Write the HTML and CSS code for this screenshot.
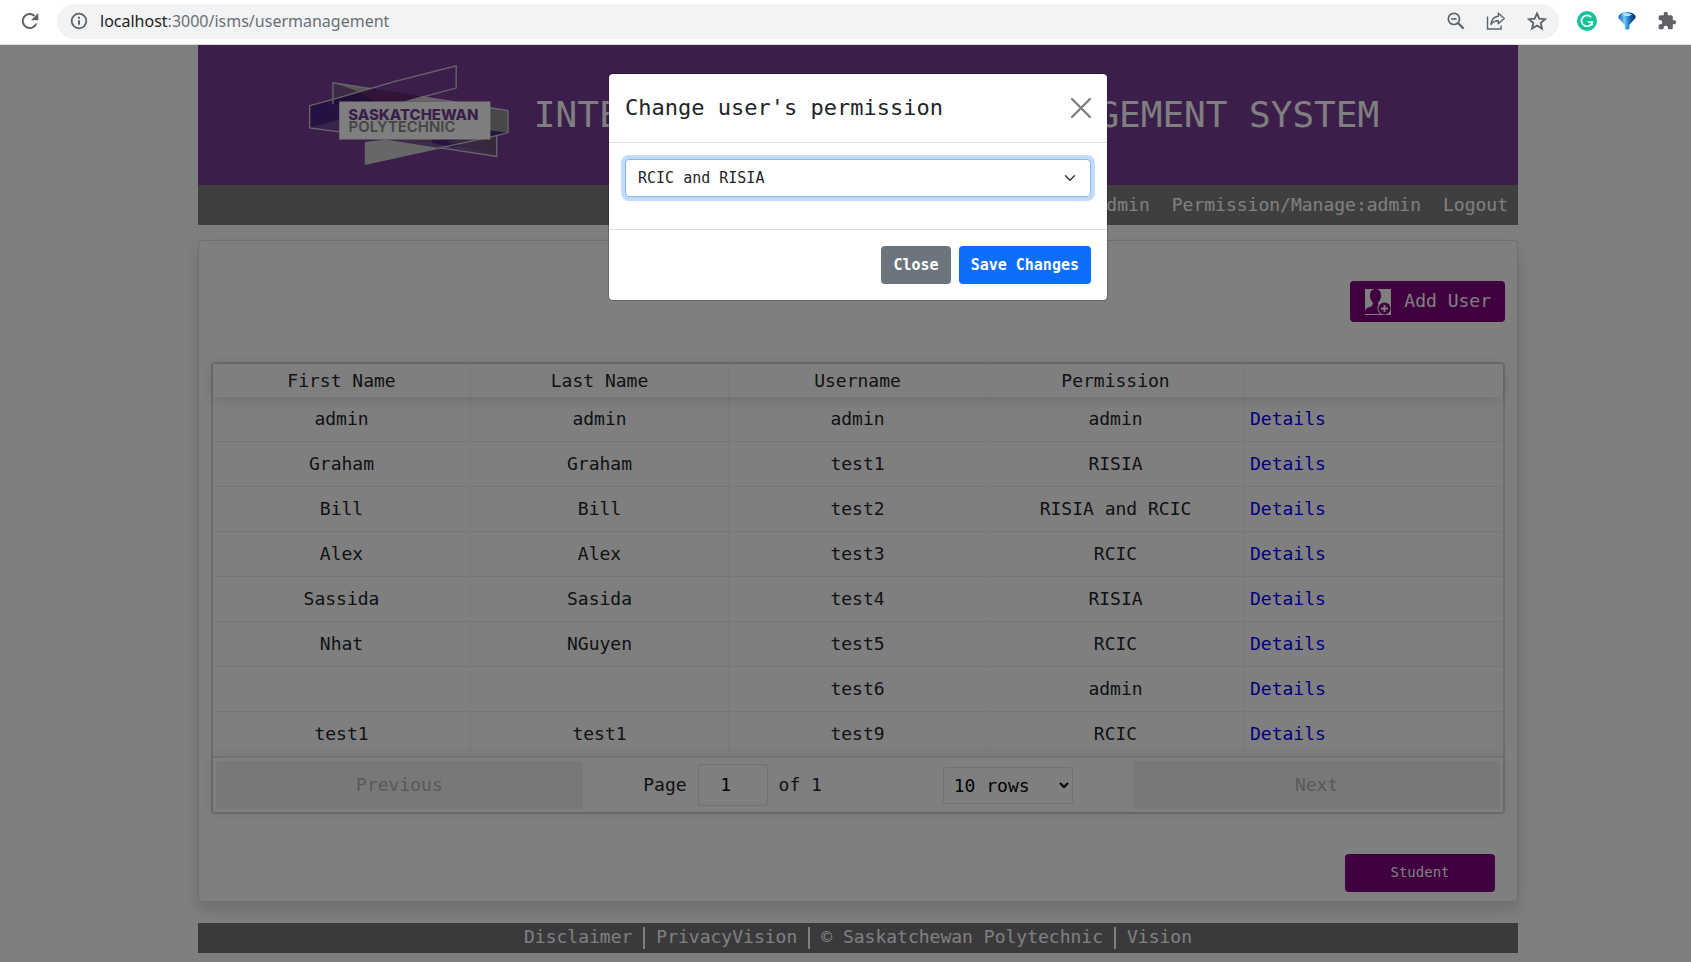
FILE: index.html
```html
<!DOCTYPE html>
<html lang="en">
<head>
<meta charset="utf-8">
<title>User management</title>
<link rel="stylesheet" href="styles.css">
</head>
<body>
<div class="toolbar">
  <button class="icon-button" type="button" aria-label="Reload">
    <svg width="18" height="18" viewBox="0 0 18 18"><path d="M15.3 11.5A7 7 0 1 1 13.6 4" fill="none" stroke="#5f6368" stroke-width="2"/><path d="M17.3 1v7.2h-7.2z" fill="#5f6368"/></svg>
  </button>
  <div class="address">
    <svg width="18" height="18" viewBox="0 0 18 18" fill="none" stroke="#5f6368" stroke-width="2"><circle cx="9" cy="9" r="7.3" stroke-width="1.8"/><path d="M9 8.2v4.6M9 4.8v2"/></svg>
    <div class="url"><span class="host">localhost</span>:3000/isms/usermanagement</div>
    <div class="address-actions">
      <button class="icon-button" type="button" aria-label="Zoom out">
        <svg width="18" height="18" viewBox="0 0 18 18" fill="none" stroke="#5f6368" stroke-width="1.7"><circle cx="6.9" cy="6.9" r="5.6"/><path d="M4.2 6.9h5.4"/><path d="M11 11l5.6 5.6" stroke-width="2.2"/></svg>
      </button>
      <button class="icon-button" type="button" aria-label="Share">
        <svg width="20" height="20" viewBox="0 0 20 20" fill="none" stroke="#5f6368" stroke-width="1.4"><path d="M1.5 5.5V18h13.6v-3.5"/><path d="M12.3 2.2l6 5.3-6 5.3V9.7C9 9.6 6.8 10.8 5 13.5 5.4 9 7.8 5.8 12.3 5.3z" stroke-linejoin="round"/></svg>
      </button>
      <button class="icon-button" type="button" aria-label="Bookmark">
        <svg width="20" height="20" viewBox="0 0 20 20" fill="none" stroke="#5f6368" stroke-width="1.8"><path d="M10 2.4l2.300 5.300 5.800.5-4.400 3.800 1.300 5.600-5-3-5 3 1.300-5.600-4.400-3.800 5.800-.5z"/></svg>
      </button>
    </div>
  </div>
  <div class="extensions">
    <button class="icon-button" type="button" aria-label="Writing assistant">
      <svg width="20" height="20" viewBox="0 0 20 20"><circle cx="10" cy="10" r="10" fill="#15c39a"/><path d="M14.2 6.2A5.5 5.5 0 1 0 15.4 11H10.8" fill="none" stroke="#fff" stroke-width="1.7"/><path d="M15 11v3.5" stroke="#fff" stroke-width="1.5"/></svg>
    </button>
    <button class="icon-button" type="button" aria-label="Filter">
      <svg width="20" height="20" viewBox="0 0 20 20"><defs><linearGradient id="gem" x1="0" x2="1"><stop offset="0" stop-color="#0b5fb8"/><stop offset=".35" stop-color="#7cc8f5"/><stop offset=".6" stop-color="#1c7fd6"/><stop offset="1" stop-color="#06204d"/></linearGradient></defs><path d="M1.500 5Q4 1 10 1t8.500 4v2L12.300 14v4q-2.300 1.500-4.600 0v-4L1.500 7z" fill="url(#gem)"/><path d="M5 3.500q5-2.500 10 0l-3 1.500H8z" fill="#b9e4fb"/></svg>
    </button>
    <button class="icon-button" type="button" aria-label="Extensions">
      <svg width="20" height="20" viewBox="0 0 24 24" fill="#5f6368"><path d="M20.5 11H19V7c0-1.1-.9-2-2-2h-4V3.500a2.500 2.500 0 0 0-5 0V5H4c-1.100 0-2 .9-2 2v3.800h1.500a2.700 2.700 0 0 1 0 5.400H2V20c0 1.100.9 2 2 2h3.800v-1.500a2.700 2.700 0 0 1 5.400 0V22H17c1.100 0 2-.9 2-2v-4h1.500a2.500 2.500 0 0 0 0-5z"/></svg>
    </button>
  </div>
</div>

<div class="viewport">
  <div class="container">
    <header class="banner">
      <svg class="logo" viewBox="0 0 602 300" role="img" aria-label="Saskatchewan Polytechnic">
        <path d="M2 122l90-24v103L2 189z" fill="#4a2484"/>
        <path d="M2 189l90-26v38z" fill="#6e4a9a"/>
        <path d="M72 52l115 18-37 12-78 22z" fill="#785289"/>
        <path d="M72 52l115 18-37 10z" fill="#aaacaa"/>
        <path d="M72 103l90-25 60 31-60 12-90-2z" fill="#461e6a"/>
        <path d="M187 70l151 23-50 16h-90l-48-29z" fill="#602a70"/>
        <path d="M285 109l53-15 100 15z" fill="#cacaca"/>
        <path d="M545 126l54 11v66l-54-6z" fill="#8f9094"/>
        <path d="M545 197l50 7-31 8-19 6z" fill="#4a2484"/>
        <path d="M170 231l60-7 165 25-225 49z" fill="#cfcfcf"/>
        <path d="M240 224h305l19-9v60l-169-26z" fill="#7a5796"/>
        <path d="M370 224h175l-115 22-60-12z" fill="#4a2484"/>
        <path d="M564 212v63L410 230z" fill="#6e5080"/>
        <g fill="none" stroke="#d0ccd6" stroke-width="4">
          <path d="M92 201L2 189v-67l70-19L262 48 443 2v67l-105 28"/>
          <path d="M72 118V53l115 18M338 95l261 42v66l-34 9v63l-170-26M170 231v67l225-49 170-37"/>
        </g>
        <path d="M91 109h455v115H91z" fill="#fff"/>
        <text class="logo-name" x="118" y="164">SASKATCHEWAN</text>
        <text class="logo-sub" x="119" y="200">POLYTECHNIC</text>
      </svg>
      <h1 class="title">INTERNATIONAL STUDENT MANAGEMENT SYSTEM</h1>
    </header>
    <nav class="nav">
      <a href="#user">User:admin</a>
      <a href="#permission">Permission/Manage:admin</a>
      <a href="#logout">Logout</a>
    </nav>

    <main class="card">
      <button class="add-user" type="button">
        <svg width="26" height="26" viewBox="0 0 26 26"><path d="M0 0h26v26H0z" fill="#fff"/><path d="M10.500 0C7 0 5 2.500 5 6.500c0 3 1 5 2.800 7 .3 2-.3 3.500-2.300 4.300C2.500 19 .3 19.500 0 22v3h15l3-10-3.500 2c-1.500-.8-1.700-2-1.300-3.500 1.800-2 2.800-4 2.800-7 0-4-2-6.500-5.500-6.500z" fill="#800080"/><circle cx="19.500" cy="19.500" r="7" fill="#fff"/><circle cx="19.500" cy="19.500" r="6" fill="#800080"/><path d="M19.500 16v7M16 19.500h7" stroke="#fff" stroke-width="1.800"/></svg>
        <span>Add User</span>
      </button>

      <div class="grid">
        <table class="users">
          <thead>
            <tr><th>First Name</th><th>Last Name</th><th>Username</th><th>Permission</th><th></th></tr>
          </thead>
          <tbody>
            <tr><td>admin</td><td>admin</td><td>admin</td><td>admin</td><td><a href="#d1">Details</a></td></tr>
            <tr><td>Graham</td><td>Graham</td><td>test1</td><td>RISIA</td><td><a href="#d2">Details</a></td></tr>
            <tr><td>Bill</td><td>Bill</td><td>test2</td><td>RISIA and RCIC</td><td><a href="#d3">Details</a></td></tr>
            <tr><td>Alex</td><td>Alex</td><td>test3</td><td>RCIC</td><td><a href="#d4">Details</a></td></tr>
            <tr><td>Sassida</td><td>Sasida</td><td>test4</td><td>RISIA</td><td><a href="#d5">Details</a></td></tr>
            <tr><td>Nhat</td><td>NGuyen</td><td>test5</td><td>RCIC</td><td><a href="#d6">Details</a></td></tr>
            <tr><td></td><td></td><td>test6</td><td>admin</td><td><a href="#d7">Details</a></td></tr>
            <tr><td>test1</td><td>test1</td><td>test9</td><td>RCIC</td><td><a href="#d8">Details</a></td></tr>
          </tbody>
        </table>
        <div class="pagination">
          <button class="page-button" type="button" disabled>Previous</button>
          <div class="page-center">
            <div class="page-info"><label for="page">Page</label><input id="page" type="text" value="1"><span>of 1</span></div>
            <select class="page-size" aria-label="Rows per page"><option>10 rows</option></select>
          </div>
          <button class="page-button" type="button" disabled>Next</button>
        </div>
      </div>

      <button class="student" type="button">Student</button>
    </main>

    <footer class="footer">
      <a href="#disclaimer">Disclaimer</a>
      <a href="#privacy">PrivacyVision</a>
      <a href="#about">© Saskatchewan Polytechnic</a>
      <a href="#vision">Vision</a>
    </footer>
  </div>

  <div class="backdrop">
    <div class="modal" role="dialog" aria-labelledby="modal-title">
      <div class="modal-header">
        <h2 id="modal-title">Change user's permission</h2>
        <button class="icon-button" type="button" aria-label="Close dialog">
          <svg width="20" height="20" viewBox="0 0 20 20"><path d="M1 1l18 18M19 1L1 19" stroke="#7f7f7f" stroke-width="2.400" stroke-linecap="round"/></svg>
        </button>
      </div>
      <div class="modal-body">
        <div class="select-wrap">
          <select class="permission" aria-label="Permission"><option>RCIC and RISIA</option></select>
          <svg class="chevron" width="12" height="12" viewBox="0 0 16 16"><path d="M2 5l6 6 6-6" fill="none" stroke="#343a40" stroke-width="2" stroke-linecap="round" stroke-linejoin="round"/></svg>
        </div>
      </div>
      <div class="modal-footer">
        <button class="btn btn-secondary" type="button">Close</button>
        <button class="btn btn-primary" type="button">Save Changes</button>
      </div>
    </div>
  </div>
</div>
</body>
</html>
```
FILE: styles.css
```css
* { box-sizing: border-box; }

body {
  margin: 0;
  min-height: 100vh;
  display: flex;
  flex-direction: column;
  background: #fff;
  color: #212529;
  font: 18px/27px "DejaVu Sans Mono", monospace;
}

button, input, select { font: inherit; color: inherit; margin: 0; }
a { text-decoration: none; }
svg { display: block; flex: none; }

.icon-button {
  display: flex;
  padding: 0;
  border: 0;
  background: none;
}

/* Browser toolbar */
.toolbar {
  display: flex;
  align-items: center;
  gap: 18px;
  height: 45px;
  padding: 0 14px 2px 21px;
  border-bottom: 1px solid #dadce0;
}
.address {
  flex: 1;
  display: flex;
  align-items: center;
  gap: 12px;
  height: 35px;
  padding: 0 12px 0 13px;
  border-radius: 18px;
  background: #f1f3f4;
}
.url {
  flex: 1;
  color: #6b6f74;
  font: 16px/24px "Noto Sans", "Open Sans", sans-serif;
}
.host { color: #202124; }
.address-actions { display: flex; align-items: center; gap: 21px; }
.extensions { display: flex; gap: 20px; }

/* Page */
.viewport {
  position: relative;
  flex: 1;
  padding-left: 25px;
}
.container { max-width: 1320px; margin: 0 auto; }

.banner {
  display: flex;
  align-items: center;
  justify-content: center;
  gap: 25px;
  height: 140px;
  padding-right: 28px;
  background: #793d96;
}
.logo { width: 200px; height: 100px; }
.logo-name { font: 800 45px Inter, sans-serif; fill: #793d96; }
.logo-sub { font: 600 45px Inter, sans-serif; fill: #8a8a8c; }
.title {
  margin: 0;
  color: #fff;
  font-size: 36px;
  font-weight: 400;
  line-height: 48px;
  white-space: nowrap;
}

.nav {
  display: flex;
  justify-content: flex-end;
  align-items: center;
  gap: 22px;
  height: 40px;
  padding: 0 10px 2px;
  background: #7f7f7f;
}
.nav a, .footer a { color: #fff; }

.card {
  display: flex;
  flex-direction: column;
  align-items: flex-end;
  gap: 40px;
  margin-top: 15px;
  padding: 40px 12px 9px;
  border: 1px solid rgba(0, 0, 0, .125);
  border-radius: 4px;
  box-shadow: 0 8px 16px rgba(0, 0, 0, .15);
}

.add-user, .student {
  border: 0;
  border-radius: 4px;
  background: #800080;
  color: #fff;
}
.add-user {
  display: flex;
  align-items: center;
  gap: 13px;
  height: 41px;
  padding: 0 14px 0 15px;
}
.add-user span { padding-bottom: 2px; }
.student {
  width: 150px;
  height: 38px;
  margin-right: 10px;
  padding-bottom: 3px;
  font-size: 14px;
}

.grid {
  align-self: stretch;
  border: 2px solid rgba(0, 0, 0, .15);
  border-radius: 4px;
}
.users {
  width: 100%;
  table-layout: fixed;
  border-spacing: 0;
}
.users thead { box-shadow: 0 2px 15px rgba(0, 0, 0, .15); }
.users th { height: 33px; padding: 0 5px; font-weight: 400; }
.users td { height: 45px; padding: 0 5px 1px; text-align: center; border-bottom: 1px solid rgba(0, 0, 0, .07); }
.users tr:last-child td { height: 44px; border-bottom: 0; }
.users th:not(:last-child), .users td:not(:last-child) { border-right: 1px solid rgba(0, 0, 0, .04); }
.users td:last-child { text-align: left; }
.users a { color: #00f; }

.pagination {
  display: flex;
  padding: 3px;
  border-top: 2px solid rgba(0, 0, 0, .1);
  box-shadow: 0 0 15px rgba(0, 0, 0, .1);
}
.page-button {
  flex: 1;
  height: 48px;
  padding: 0 0 2px;
  border: 0;
  border-radius: 3px;
  background: rgba(0, 0, 0, .06);
  color: #b4b4b4;
}
.page-center {
  flex: 1.5;
  display: flex;
  align-items: center;
  justify-content: space-around;
}
.page-info { display: flex; align-items: center; gap: 11px; }
.page-info label, .page-info span { padding-bottom: 2px; }
.page-info input {
  width: 70px;
  height: 42px;
  padding: 0 16px 2px 2px;
  text-align: center;
}
.page-info input, .page-size {
  border: 1px solid rgba(0, 0, 0, .1);
  border-radius: 3px;
  background: #fff;
  color: #000;
}
.page-size { width: 130px; height: 37px; padding: 0 6px; }

.footer {
  display: flex;
  align-items: center;
  justify-content: center;
  height: 30px;
  margin-top: 21px;
  background: #757578;
}
.footer a { padding: 0 11px 2px; line-height: 20px; }
.footer a + a { border-left: 2px solid #fff; }

/* Dialog */
.backdrop {
  position: absolute;
  inset: 0;
  padding: 28px 0 0 25px;
  background: rgba(0, 0, 0, .5);
}
.modal {
  max-width: 500px;
  margin: 0 auto;
  border: 1px solid rgba(0, 0, 0, .2);
  border-radius: 5px;
  background: #fff;
  background-clip: padding-box;
}
.modal-header {
  display: flex;
  align-items: center;
  justify-content: space-between;
  height: 69px;
  padding: 0 16px;
  border-bottom: 1px solid #dee2e6;
}
.modal-header h2 { margin: 0; font-size: 22px; font-weight: 400; line-height: 36px; }
.modal-body { padding: 16px 16px 32px; }
.select-wrap { position: relative; }
.permission {
  display: block;
  width: 100%;
  height: 38px;
  padding: 0 36px 0 12px;
  appearance: none;
  border: 1px solid #86b7fe;
  border-radius: 4px;
  box-shadow: 0 0 0 4px #c2dbfe;
  background: #fff;
  font-size: 15px;
}
.chevron { position: absolute; right: 15px; top: 13px; pointer-events: none; }
.modal-footer {
  display: flex;
  justify-content: flex-end;
  gap: 8px;
  padding: 16px;
  border-top: 1px solid #dee2e6;
}
.btn {
  height: 38px;
  padding: 0 12px;
  border: 0;
  border-radius: 4px;
  color: #fff;
  font-size: 15px;
  font-weight: 700;
}
.btn-secondary { background: #6c757d; }
.btn-primary { background: #0d6efd; }
```
